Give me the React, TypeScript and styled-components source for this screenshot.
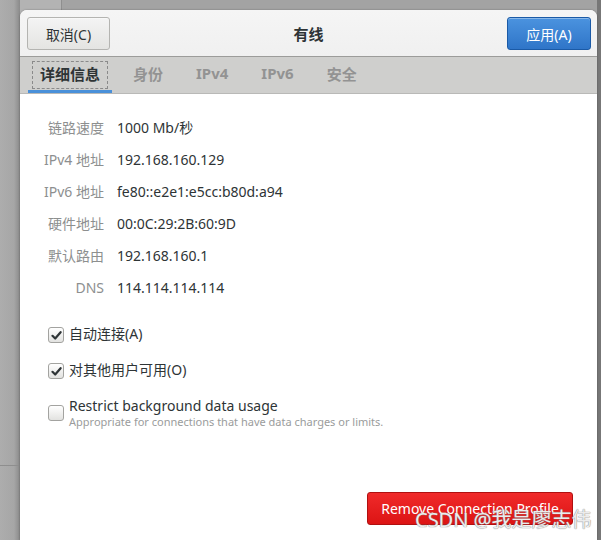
import React from "react";
import styled, { createGlobalStyle } from "styled-components";

const GlobalStyle = createGlobalStyle`
  html, body {
    margin: 0;
    padding: 0;
    height: 540px;
    overflow: hidden;
  }

  body {
    font-family: "Noto Sans", "Noto Sans CJK SC", sans-serif;
    background:
      linear-gradient(to right, transparent 597px, #777777 597px),
      linear-gradient(to bottom, transparent 465px, #8e8e8e 465px, #8e8e8e 466px, transparent 466px),
      linear-gradient(to right, #adadad 0, #a6a6a6 14px, #8a8a8a 20px, transparent 20px),
      linear-gradient(to right, #b3b3b3 0, #b3b3b3 61px, #8f8f8f 61px, #8f8f8f 62px, #a3a3a3 62px);
  }
`;

const Desktop = styled.div`
  padding: 10px 0 0 20px;
  height: 540px;
  box-sizing: border-box;
`;

const Dialog = styled.div`
  position: relative;
  width: 577px;
  height: 530px;
  background: #ffffff;
  border-radius: 7px 7px 0 0;
  overflow: hidden;
  box-shadow: 0 0 2px rgba(0, 0, 0, 0.35);
  display: flex;
  flex-direction: column;
`;

const Header = styled.div`
  height: 47px;
  box-sizing: border-box;
  padding: 7px 6px 0 7px;
  display: flex;
  align-items: flex-start;
  justify-content: space-between;
  background: linear-gradient(#f5f5f5, #f0f0f0);
  border-bottom: 1px solid #9c9c9a;
`;

const HeaderButton = styled.button<{ $primary?: boolean }>`
  width: ${(p) => (p.$primary ? "84px" : "83px")};
  height: 33px;
  border-radius: 3px;
  font-family: "Noto Sans", "Noto Sans CJK SC", sans-serif;
  font-size: 14px;
  padding: 0;
  color: ${(p) => (p.$primary ? "#ffffff" : "#2e3436")};
  border: 1px solid ${(p) => (p.$primary ? "#1b5aa6" : "#b4b4b1")};
  background: ${(p) =>
    p.$primary
      ? "linear-gradient(#4b93df, #2f75c8)"
      : "linear-gradient(#f4f4f4, #e4e4e2)"};
  box-shadow: inset 0 1px rgba(255, 255, 255, 0.35);
`;

const Title = styled.div`
  align-self: center;
  margin-top: -7px;
  font-size: 15px;
  font-weight: bold;
  color: #2e3436;
`;

const TabBar = styled.div`
  height: 37px;
  box-sizing: border-box;
  padding: 0 0 0 8px;
  display: flex;
  gap: 9px;
  background: #cfcfcd;
  border-bottom: 1px solid #b9b9b7;
`;

const Tab = styled.div<{ $active?: boolean }>`
  position: relative;
  padding: 0 12px 1px;
  display: flex;
  align-items: center;
  font-size: 15px;
  font-weight: bold;
  color: ${(p) => (p.$active ? "#2e3436" : "#939393")};
  border-bottom: 3px solid ${(p) => (p.$active ? "#4a90d9" : "transparent")};

  ${(p) =>
    p.$active &&
    `
    &::before {
      content: "";
      position: absolute;
      left: 4px;
      right: 4px;
      top: 4px;
      bottom: 1px;
      border: 1px dashed #8a8a8a;
    }
  `}
`;

const Content = styled.div`
  flex: 1;
  padding: 17px 24px 0 24px;
  display: flex;
  flex-direction: column;
`;

const InfoGrid = styled.div`
  display: grid;
  grid-template-columns: 60px 1fr;
  grid-auto-rows: 32px;
  column-gap: 13px;
  align-items: center;
  font-size: 14px;
`;

const Label = styled.div`
  text-align: right;
  color: #8d8f8f;
  white-space: nowrap;
`;

const Value = styled.div`
  color: #2e3436;
`;

const Options = styled.div`
  margin-top: 23px;
  padding-left: 4px;
  display: flex;
  flex-direction: column;
  gap: 19px;
`;

const Option = styled.label`
  display: flex;
  align-items: flex-start;
  gap: 5px;
  font-size: 14px;
  color: #2e3436;
`;

const Box = styled.span<{ $checked?: boolean }>`
  flex: none;
  width: 14px;
  height: 14px;
  margin-top: ${(p) => (p.$checked ? "1px" : "7px")};
  border: 1px solid #a3a3a0;
  border-radius: 3px;
  background: linear-gradient(#ffffff, #e2e2e0);
  display: flex;
  align-items: center;
  justify-content: center;
`;

const OptionText = styled.div`
  display: flex;
  flex-direction: column;
  line-height: 16px;
`;

const OptionHint = styled.span`
  font-size: 11px;
  line-height: 16px;
  color: #9a9c9c;
`;

const Footer = styled.div`
  margin-top: 62px;
  display: flex;
  justify-content: flex-end;
`;

const RemoveButton = styled.button`
  width: 206px;
  height: 33px;
  border-radius: 3px;
  border: 1px solid #b01010;
  background: linear-gradient(#f02a2a, #dc1414);
  color: #ffffff;
  font-family: "Noto Sans", "Noto Sans CJK SC", sans-serif;
  font-size: 14px;
  padding: 0;
`;

const Watermark = styled.div`
  position: absolute;
  left: 395px;
  top: 494px;
  font-family: "Noto Sans", "Noto Sans CJK SC", sans-serif;
  font-size: 20px;
  color: rgba(255, 255, 255, 0.85);
  text-shadow: 0 0 1px #8a8a8a, 0 0 1px #8a8a8a;
  white-space: nowrap;
`;

const Check = () => (
  <svg width="11" height="11" viewBox="0 0 11 11">
    <path
      d="M1.5 5.8 L4.2 8.5 L9.6 2.2"
      fill="none"
      stroke="#2e3436"
      strokeWidth="2.2"
      strokeLinecap="round"
      strokeLinejoin="round"
    />
  </svg>
);

const info: [string, string][] = [
  ["链路速度", "1000 Mb/秒"],
  ["IPv4 地址", "192.168.160.129"],
  ["IPv6 地址", "fe80::e2e1:e5cc:b80d:a94"],
  ["硬件地址", "00:0C:29:2B:60:9D"],
  ["默认路由", "192.168.160.1"],
  ["DNS", "114.114.114.114"],
];

const tabs = ["详细信息", "身份", "IPv4", "IPv6", "安全"];

const App: React.FC = () => {
  return (
    <>
      <GlobalStyle />
      <Desktop>
        <Dialog>
          <Header>
            <HeaderButton>取消(C)</HeaderButton>
            <Title>有线</Title>
            <HeaderButton $primary>应用(A)</HeaderButton>
          </Header>
          <TabBar>
            {tabs.map((t, i) => (
              <Tab key={t} $active={i === 0}>
                {t}
              </Tab>
            ))}
          </TabBar>
          <Content>
            <InfoGrid>
              {info.map(([label, value]) => (
                <React.Fragment key={label}>
                  <Label>{label}</Label>
                  <Value>{value}</Value>
                </React.Fragment>
              ))}
            </InfoGrid>
            <Options>
              <Option>
                <Box $checked>
                  <Check />
                </Box>
                <OptionText>自动连接(A)</OptionText>
              </Option>
              <Option>
                <Box $checked>
                  <Check />
                </Box>
                <OptionText>对其他用户可用(O)</OptionText>
              </Option>
              <Option>
                <Box />
                <OptionText>
                  Restrict background data usage
                  <OptionHint>
                    Appropriate for connections that have data charges or limits.
                  </OptionHint>
                </OptionText>
              </Option>
            </Options>
            <Footer>
              <RemoveButton>Remove Connection Profile</RemoveButton>
            </Footer>
          </Content>
          <Watermark>CSDN @我是廖志伟</Watermark>
        </Dialog>
      </Desktop>
    </>
  );
};

export default App;
